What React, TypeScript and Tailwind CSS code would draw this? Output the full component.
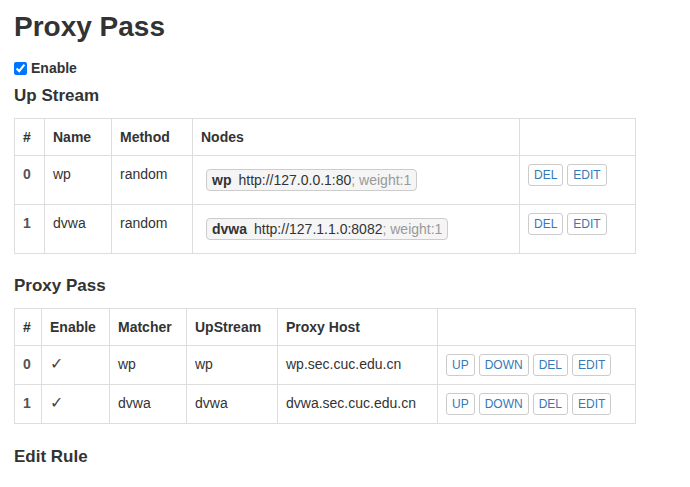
import React from "react";

const Btn = ({ children }: { children: React.ReactNode }) => (
  <span className="inline-block h-[22px] px-[5px] border border-[#ccc] rounded-[3px] bg-white text-[12px] leading-[20px] text-[#337ab7]">
    {children}
  </span>
);

const Node = ({ name, url }: { name: string; url: string }) => (
  <span className="inline-flex items-center h-[22px] px-[5px] m-[5px] border border-[#ccc] rounded-[4px] bg-[#f5f5f5] text-[14px] leading-[20px]">
    <b className="font-bold">{name}</b>
    <span className="ml-[7px] text-[#333]">{url}</span>
    <span className="text-[#999]">; weight:1</span>
  </span>
);

const th = "border border-[#ddd] px-[8px] py-[8px] text-left font-bold align-bottom";
const td = "border border-[#ddd] px-[8px] py-[8px] align-top";

export default function App() {
  const up = [
    { id: 0, name: "wp", url: "http://127.0.0.1:80" },
    { id: 1, name: "dvwa", url: "http://127.1.1.0:8082" },
  ];
  const pp = [
    { id: 0, m: "wp", u: "wp", h: "wp.sec.cuc.edu.cn" },
    { id: 1, m: "dvwa", u: "dvwa", h: "dvwa.sec.cuc.edu.cn" },
  ];
  return (
    <div
      className="px-[14px] pt-[11px] text-[#333] text-[14px] leading-[20px]"
      style={{ fontFamily: '"Liberation Sans", Arial, sans-serif' }}
    >
      <h1 className="text-[28px] font-bold leading-[31px]">Proxy Pass</h1>
      <label className="mt-[16px] flex items-center h-[20px] font-bold">
        <input type="checkbox" defaultChecked className="w-[13px] h-[13px] m-0 mr-[4px]" />
        Enable
      </label>
      <h3 className="mt-[8px] text-[17px] font-bold leading-[19px]">Up Stream</h3>
      <table className="mt-[13px] w-[621px] table-fixed border-collapse">
        <colgroup>
          <col className="w-[30px]" />
          <col className="w-[67px]" />
          <col className="w-[81px]" />
          <col className="w-[327px]" />
          <col className="w-[116px]" />
        </colgroup>
        <thead>
          <tr>
            <th className={th}>#</th>
            <th className={th}>Name</th>
            <th className={th}>Method</th>
            <th className={th}>Nodes</th>
            <th className={th}></th>
          </tr>
        </thead>
        <tbody>
          {up.map((r) => (
            <tr key={r.id}>
              <td className={td + " font-bold text-[#555]"}>{r.id}</td>
              <td className={td}>{r.name}</td>
              <td className={td}>random</td>
              <td className={td}>
                <div className="flex">
                  <Node name={r.name} url={r.url} />
                </div>
              </td>
              <td className={td}>
                <div className="flex gap-[4px]">
                  <Btn>DEL</Btn>
                  <Btn>EDIT</Btn>
                </div>
              </td>
            </tr>
          ))}
        </tbody>
      </table>
      <h3 className="mt-[22px] text-[17px] font-bold leading-[19px]">Proxy Pass</h3>
      <table className="mt-[13px] w-[621px] table-fixed border-collapse">
        <colgroup>
          <col className="w-[27px]" />
          <col className="w-[68px]" />
          <col className="w-[77px]" />
          <col className="w-[91px]" />
          <col className="w-[160px]" />
          <col className="w-[198px]" />
        </colgroup>
        <thead>
          <tr>
            <th className={th}>#</th>
            <th className={th}>Enable</th>
            <th className={th}>Matcher</th>
            <th className={th}>UpStream</th>
            <th className={th}>Proxy Host</th>
            <th className={th}></th>
          </tr>
        </thead>
        <tbody>
          {pp.map((r) => (
            <tr key={r.id}>
              <td className={td + " font-bold text-[#555] align-middle"}>{r.id}</td>
              <td className={td + " align-middle"}>
                <span style={{ fontFamily: '"DejaVu Sans", sans-serif' }} className="text-[16px] font-extralight text-[#444]">✓</span>
              </td>
              <td className={td + " align-middle"}>{r.m}</td>
              <td className={td + " align-middle"}>{r.u}</td>
              <td className={td + " align-middle"}>{r.h}</td>
              <td className={td}>
                <div className="flex gap-[4px]">
                  <Btn>UP</Btn>
                  <Btn>DOWN</Btn>
                  <Btn>DEL</Btn>
                  <Btn>EDIT</Btn>
                </div>
              </td>
            </tr>
          ))}
        </tbody>
      </table>
      <h3 className="mt-[23px] text-[17px] font-bold leading-[19px]">Edit Rule</h3>
    </div>
  );
}
